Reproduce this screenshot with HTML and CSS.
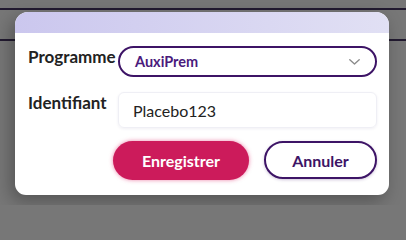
FILE: index.html
```html
<!DOCTYPE html>
<html lang="fr">
<head>
<meta charset="utf-8">
<link rel="stylesheet" href="styles.css">
</head>
<body>
<div class="page-top"></div>
<div class="page-band"></div>
<div class="dialog">
  <div class="dialog-header"></div>
  <form class="dialog-body">
    <label class="label">Programme</label>
    <div class="select">
      <span class="select-value">AuxiPrem</span>
      <svg class="chevron" width="11" height="6" viewBox="0 0 11 6"><polyline points="0.8,0.8 5.5,5 10.2,0.8" fill="none" stroke="#8c8c8c" stroke-width="1.4" stroke-linecap="round" stroke-linejoin="round"/></svg>
    </div>
    <label class="label">Identifiant</label>
    <div class="input">Placebo123</div>
    <div class="actions">
      <button type="button" class="btn btn-primary">Enregistrer</button>
      <button type="button" class="btn btn-outline">Annuler</button>
    </div>
  </form>
</div>
</body>
</html>
```
FILE: styles.css
```css
html, body {
  margin: 0;
  padding: 0;
}
body {
  width: 406px;
  height: 205px;
  overflow: hidden;
  background: #777777;
  font-family: "Lato", "Open Sans", sans-serif;
  position: relative;
}
.page-top {
  height: 8px;
  border-bottom: 2px solid #221a30;
}
.page-band {
  height: 29px;
  border-bottom: 2px solid #221a30;
}
.dialog {
  position: absolute;
  left: 15px;
  top: 12px;
  width: 374px;
  height: 183px;
  background: #ffffff;
  border-radius: 13px 13px 11px 11px;
  overflow: hidden;
  box-shadow: -4px 6px 18px rgba(0, 0, 0, 0.3);
}
.dialog-header {
  height: 21px;
  background: linear-gradient(to right, #cbc7ee, #e1e0f4);
}
.dialog-body {
  margin: 0;
  padding: 13px 12px 15px 13px;
  display: grid;
  grid-template-columns: 90px 259px;
  grid-template-rows: 31px 36px 39px;
  row-gap: 15px;
}
.dialog-body .actions {
  margin-top: -2px;
}
.label {
  font-weight: 700;
  font-size: 17px;
  color: #222222;
  padding-top: 1px;
  line-height: 20px;
  white-space: nowrap;
}
.select {
  box-sizing: border-box;
  border: 2px solid #3d1466;
  border-radius: 16px;
  display: flex;
  align-items: center;
  justify-content: space-between;
  padding: 0 15px 0 15px;
}
.select-value {
  font-size: 14.5px;
  font-weight: 700;
  color: #4a1a7c;
}
.chevron {
  display: block;
}
.input {
  box-sizing: border-box;
  border: 1px solid #efeff5;
  border-radius: 6px;
  box-shadow: 0 1px 3px rgba(60, 50, 120, 0.08);
  display: flex;
  align-items: center;
  padding-left: 14px;
  font-size: 16px;
  color: #222222;
}
.actions {
  grid-column: 1 / -1;
  display: flex;
  justify-content: flex-end;
  gap: 15px;
}
.btn {
  box-sizing: border-box;
  height: 39px;
  border-radius: 20px;
  font-family: "Lato", "Open Sans", sans-serif;
  font-weight: 700;
  font-size: 16px;
  cursor: pointer;
}
.btn-primary {
  width: 136px;
  border: none;
  background: #cc1b5b;
  color: #ffffff;
  box-shadow: 0 0 4px rgba(220, 30, 100, 0.55);
}
.btn-outline {
  width: 113px;
  height: 38px;
  background: #ffffff;
  border: 2px solid #3d1466;
  color: #3d1466;
  box-shadow: 0 1px 3px rgba(61, 20, 102, 0.25);
}
```
